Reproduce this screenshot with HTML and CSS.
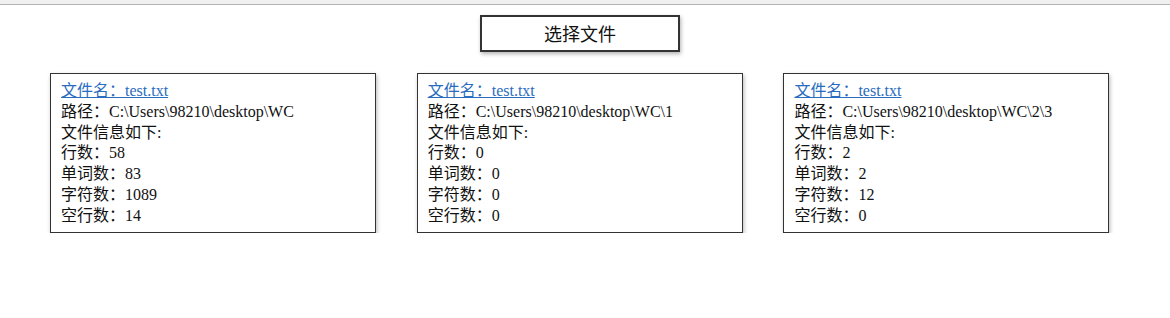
FILE: index.html
```html
<!DOCTYPE html>
<html lang="zh-CN">
<head>
<meta charset="utf-8">
<title>WC</title>
<link rel="stylesheet" href="styles.css">
</head>
<body>
<div class="topbar"></div>
<div class="page">
  <div class="toolbar">
    <button class="choose">选择文件</button>
  </div>
  <div class="cards">
    <div class="card">
      <a class="name" href="#">文件名：test.txt</a>
      <div class="line">路径：C:\Users\98210\desktop\WC</div>
      <div class="line">文件信息如下:</div>
      <div class="line">行数：58</div>
      <div class="line">单词数：83</div>
      <div class="line">字符数：1089</div>
      <div class="line">空行数：14</div>
    </div>
    <div class="card">
      <a class="name" href="#">文件名：test.txt</a>
      <div class="line">路径：C:\Users\98210\desktop\WC\1</div>
      <div class="line">文件信息如下:</div>
      <div class="line">行数：0</div>
      <div class="line">单词数：0</div>
      <div class="line">字符数：0</div>
      <div class="line">空行数：0</div>
    </div>
    <div class="card">
      <a class="name" href="#">文件名：test.txt</a>
      <div class="line">路径：C:\Users\98210\desktop\WC\2\3</div>
      <div class="line">文件信息如下:</div>
      <div class="line">行数：2</div>
      <div class="line">单词数：2</div>
      <div class="line">字符数：12</div>
      <div class="line">空行数：0</div>
    </div>
  </div>
</div>
</body>
</html>
```
FILE: styles.css
```css
html, body {
  margin: 0;
  padding: 0;
  background: #ffffff;
}
.topbar {
  height: 4px;
  background: #f0f0f0;
  border-bottom: 1px solid #b4b4b4;
}
.page {
  width: 1160px;
  font-family: "Liberation Serif", "Noto Sans CJK SC", serif;
  font-size: 16px;
  color: #111;
}
.toolbar {
  display: flex;
  justify-content: center;
  padding-top: 10px;
}
.choose {
  box-sizing: border-box;
  width: 200px;
  height: 37px;
  border: 2px solid #333;
  background: #fff;
  box-shadow: 1px 2px 4px rgba(0,0,0,0.3);
  font-family: "Noto Sans CJK SC", sans-serif;
  font-size: 18px;
  line-height: 31px;
  color: #111;
  padding: 0;
}
.cards {
  display: grid;
  grid-template-columns: repeat(3, 326px);
  column-gap: 40.7px;
  padding-left: 50px;
  margin-top: 21px;
}
.card {
  border: 1px solid #333;
  box-shadow: 1px 2px 4px rgba(0,0,0,0.28);
  padding: 7px 10px 5px 10px;
  line-height: 20.8px;
}
.name {
  display: block;
  color: #2a6cc0;
  text-decoration: underline;
}
.line {
  white-space: nowrap;
}
```
